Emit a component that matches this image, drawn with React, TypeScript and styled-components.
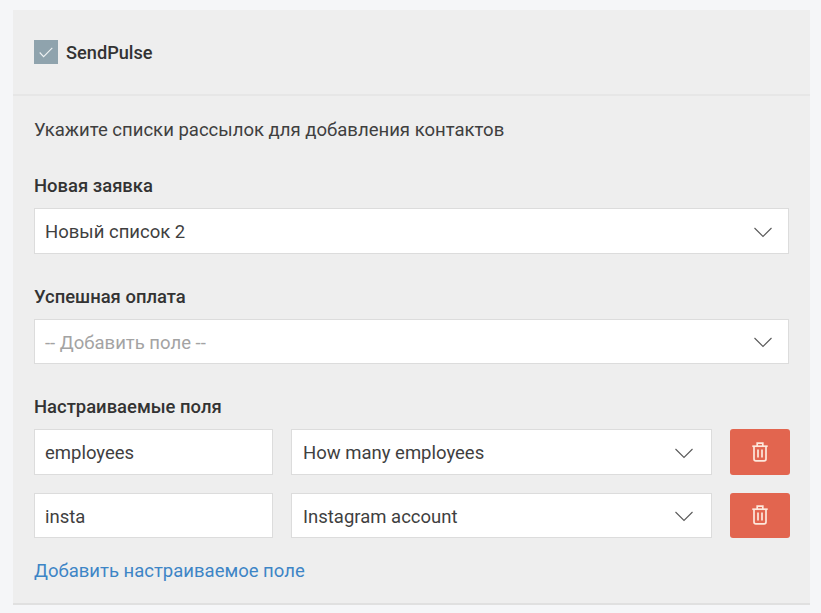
import React from "react";
import styled, { createGlobalStyle } from "styled-components";

const GlobalStyle = createGlobalStyle`
  html, body {
    margin: 0;
    padding: 0;
    background: #f5f6f8;
    font-family: Roboto, "Liberation Sans", sans-serif;
    color: #3a3a3a;
  }
`;

const Chevron = () => (
  <ChevronIcon width="18" height="11" viewBox="0 0 18 11" fill="none">
    <path d="M0.5 1 L9 9.5 L17.5 1" stroke="#5a5a5a" strokeWidth="1.1" />
  </ChevronIcon>
);

const Trash = () => (
  <svg width="16" height="20" viewBox="0 0 16 20" fill="none" stroke="#fde8dc" strokeWidth="1.7">
    <path d="M0.3 4.2 H15.7" />
    <path d="M5.2 4 V1.2 H10.8 V4" />
    <path d="M2 4.2 V17 Q2 18.9 3.9 18.9 H12.1 Q14 18.9 14 17 V4.2" />
    <path d="M6 7.5 V15.5 M10 7.5 V15.5" />
  </svg>
);

const fields = [
  { name: "employees", label: "How many employees" },
  { name: "insta", label: "Instagram account" },
];

export default function App() {
  return (
    <Page>
      <GlobalStyle />
      <Panel>
        <PanelHeader>
          <CheckBox>
            <svg width="14" height="11" viewBox="0 0 14 11" fill="none">
              <path d="M0.7 5.5 L4.6 9.6 L13.3 0.8" stroke="#eef2f3" strokeWidth="1.1" />
            </svg>
          </CheckBox>
          <Title>SendPulse</Title>
        </PanelHeader>
        <PanelBody>
          <Hint>Укажите списки рассылок для добавления контактов</Hint>
          <Label $top={33}>Новая заявка</Label>
          <Select>
            <span>Новый список 2</span>
            <Chevron />
          </Select>
          <Label $top={32}>Успешная оплата</Label>
          <Select>
            <Placeholder>-- Добавить поле --</Placeholder>
            <Chevron />
          </Select>
          <Label $top={32}>Настраиваемые поля</Label>
          <FieldRows>
            {fields.map((field) => (
              <FieldRow key={field.name}>
                <Select>
                  <span>{field.name}</span>
                </Select>
                <RowSelect>
                  <span>{field.label}</span>
                  <Chevron />
                </RowSelect>
                <DeleteButton>
                  <Trash />
                </DeleteButton>
              </FieldRow>
            ))}
          </FieldRows>
          <AddLink>Добавить настраиваемое поле</AddLink>
        </PanelBody>
      </Panel>
    </Page>
  );
}

const Page = styled.div`
  width: 821px;
  height: 613px;
  padding: 10px 11px 0 13px;
  box-sizing: border-box;
  overflow: hidden;
`;

const Panel = styled.div`
  background: #eeeeee;
  border-bottom: 2px solid #e0e0e0;
  height: 595px;
  box-sizing: border-box;
`;

const PanelHeader = styled.div`
  height: 86px;
  box-sizing: border-box;
  border-bottom: 2px solid #e6e6e6;
  padding: 0 21px;
  display: flex;
  align-items: center;
  gap: 8px;
`;

const CheckBox = styled.div`
  width: 24px;
  height: 24px;
  background: #8fa3ad;
  display: flex;
  align-items: center;
  justify-content: center;
`;

const Title = styled.div`
  font-size: 18.2px;
  font-weight: 500;
  color: #333;
`;

const PanelBody = styled.div`
  padding: 22px 21px 0;
`;

const Hint = styled.div`
  font-size: 18.55px;
  line-height: 24px;
  color: #3f3f3f;
`;

const Label = styled.div<{ $top: number }>`
  margin-top: ${(p) => p.$top}px;
  margin-bottom: 11px;
  font-size: 18.45px;
  line-height: 22px;
  font-weight: 500;
  color: #333;
`;

const Select = styled.div`
  height: 45.5px;
  box-sizing: border-box;
  background: #fff;
  border: 1px solid #dcdcdc;
  padding: 3px 16px 0 10px;
  display: flex;
  align-items: center;
  justify-content: space-between;
  font-size: 18.5px;
  color: #3f3f3f;
`;

const RowSelect = styled(Select)`
  padding: 3px 18px 0 11px;
`;

const Placeholder = styled.span`
  color: #a3a3a3;
`;

const ChevronIcon = styled.svg`
  flex: none;
`;

const FieldRows = styled.div`
  display: flex;
  flex-direction: column;
  gap: 18px;
`;

const FieldRow = styled.div`
  display: grid;
  grid-template-columns: 239px 421px 60px;
  column-gap: 18px;
`;

const DeleteButton = styled.div`
  background: #e2654f;
  border-radius: 3px;
  display: flex;
  align-items: center;
  justify-content: center;
`;

const AddLink = styled.div`
  margin-top: 21px;
  font-size: 18.5px;
  line-height: 24px;
  color: #3d85c6;
`;
